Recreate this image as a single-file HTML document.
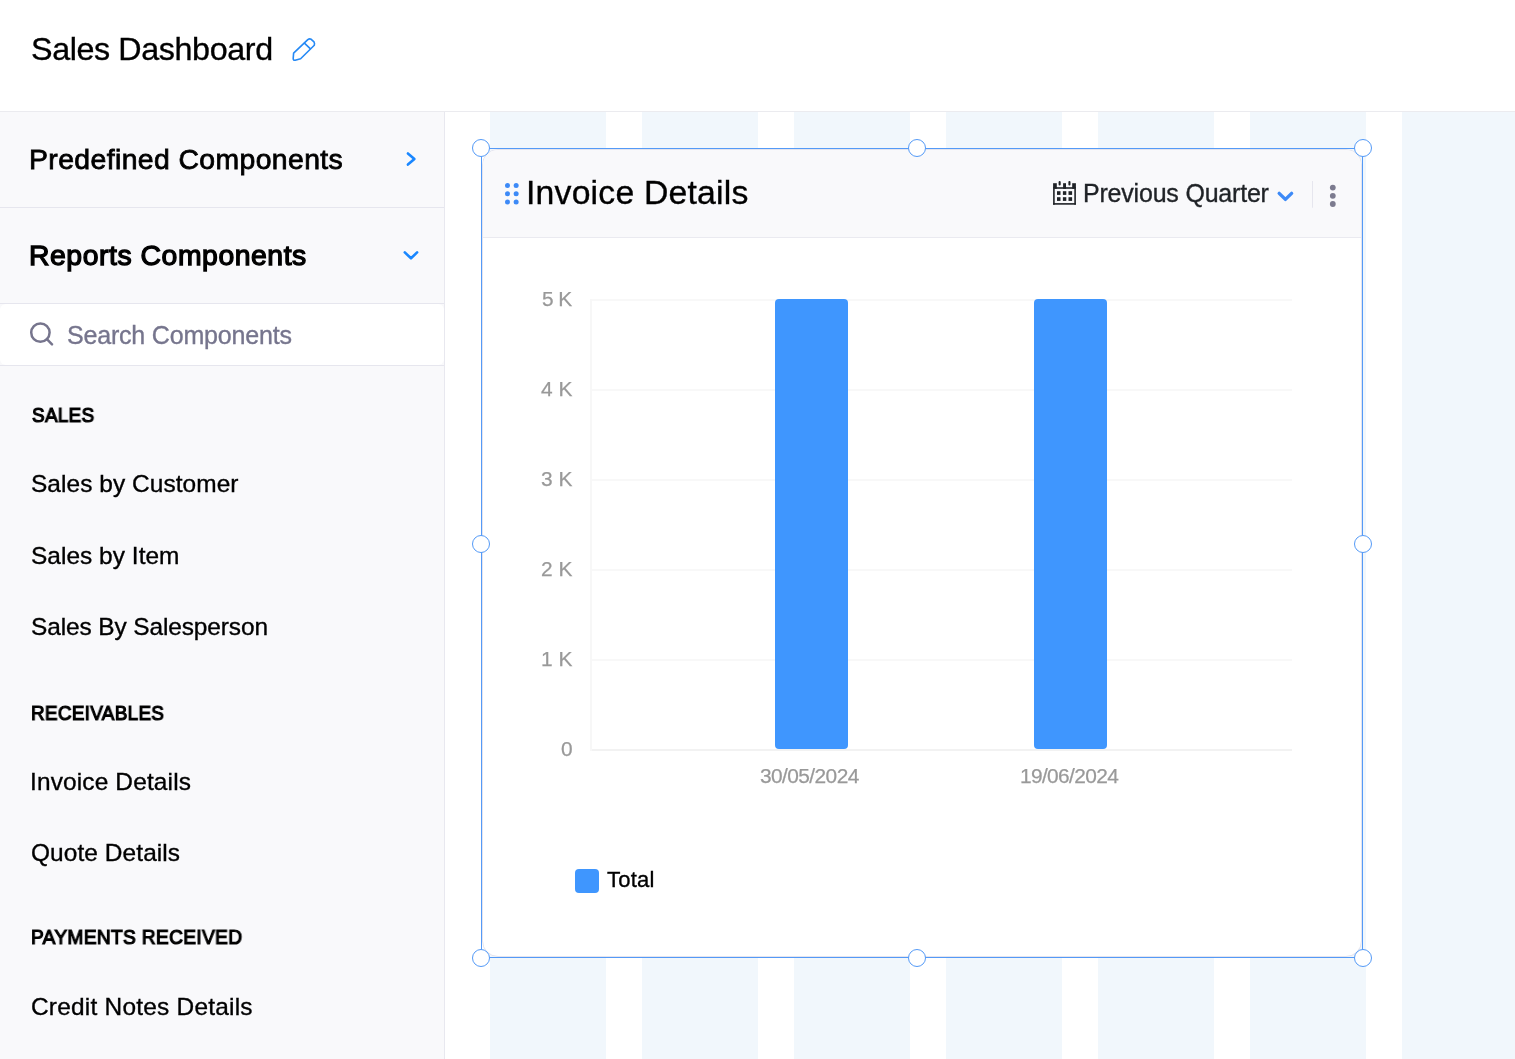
<!DOCTYPE html>
<html><head><meta charset="utf-8">
<style>
*{margin:0;padding:0;box-sizing:border-box}
html,body{width:1515px;height:1059px;overflow:hidden;background:#fff;font-family:"Liberation Sans",sans-serif;color:#000}
.a{position:absolute;white-space:nowrap;line-height:1;will-change:transform}
#hdr{position:absolute;left:0;top:0;width:1515px;height:112px;background:#fff;border-bottom:1px solid #ebebef}
#side{position:absolute;left:0;top:112px;width:445px;height:947px;background:#f9f9fb;border-right:1px solid #e8e8ef}
.sep{position:absolute;left:0;width:444px;height:1px;background:#e6e6ee}
#search{position:absolute;left:0;top:304px;width:444px;height:61px;background:#fff;border-radius:6px}
.col{position:absolute;top:112px;width:116px;height:947px;background:#f1f7fc}
#card{position:absolute;left:482px;top:149px;width:880px;height:808px;background:#fff;border:1px solid #e4e4ee;border-radius:16px;overflow:hidden}
#chd{position:absolute;left:0;top:0;width:100%;height:88px;background:#f9f9fb;border-bottom:1px solid #eaeaf0}
.grid{position:absolute;left:591px;width:701px;height:2px;background:#f8f8f8}
.yl{position:absolute;color:#999;font-size:20px;line-height:1;text-align:right;width:60px;left:512px}
.bar{position:absolute;top:299px;width:73px;height:450px;background:#3f96fe;border-radius:4px}
.xl{position:absolute;color:#999;font-size:20px;line-height:1}
.sl{position:absolute;background:#549af7}
.hd{position:absolute;width:18px;height:18px;border:1.7px solid #549af7;border-radius:50%;background:#fff}
</style></head>
<body>
<div id="hdr"></div>
<div class="a" style="left:30.59px;top:33.22px;font-size:32.28px;letter-spacing:-0.389px;-webkit-text-stroke:0.35px currentColor">Sales Dashboard</div>
<svg style="position:absolute;left:285px;top:32px" width="40" height="36" viewBox="0 0 40 36" fill="none" stroke="#2589f5" stroke-width="1.6" stroke-linejoin="round" stroke-linecap="round">
<path d="M8.6 21.2 L22.8 7.6 Q24.5 6.3 26.2 7.3 L29 9.9 Q29.9 11.4 29.3 13.2 L15.6 26.8 L10.2 28.2 Q8 28.6 8.2 26.4 Z"/>
<path d="M19.4 11.2 L25.2 16.7"/>
</svg>

<div id="side">
</div>
<div class="sep" style="top:207px"></div>
<div class="sep" style="top:303px"></div>
<div id="search"></div>
<div class="sep" style="top:365px"></div>

<div class="a" style="left:29.13px;top:144.53px;font-size:28.37px;letter-spacing:0.397px;-webkit-text-stroke:0.8px currentColor">Predefined Components</div>
<div class="a" style="left:29.32px;top:240.67px;font-size:28.37px;letter-spacing:0.547px;-webkit-text-stroke:1.3px currentColor">Reports Components</div>
<div class="a" style="left:67.12px;top:322.61px;font-size:25.04px;letter-spacing:-0.204px;color:#76758d;-webkit-text-stroke:0.35px currentColor">Search Components</div>
<div class="a" style="left:31.85px;top:405.27px;font-size:20.60px;letter-spacing:0.400px;transform:scaleX(0.9144);transform-origin:0 0;-webkit-text-stroke:1.2px currentColor">SALES</div>
<div class="a" style="left:31.31px;top:472.20px;font-size:24.45px;letter-spacing:0.064px;-webkit-text-stroke:0.35px currentColor">Sales by Customer</div>
<div class="a" style="left:31.36px;top:543.93px;font-size:24.45px;letter-spacing:0.032px;-webkit-text-stroke:0.35px currentColor">Sales by Item</div>
<div class="a" style="left:31.34px;top:614.93px;font-size:24.45px;letter-spacing:-0.106px;-webkit-text-stroke:0.35px currentColor">Sales By Salesperson</div>
<div class="a" style="left:30.96px;top:702.83px;font-size:20.60px;letter-spacing:0.400px;transform:scaleX(0.9130);transform-origin:0 0;-webkit-text-stroke:1.2px currentColor">RECEIVABLES</div>
<div class="a" style="left:29.85px;top:769.52px;font-size:24.45px;letter-spacing:0.143px;-webkit-text-stroke:0.35px currentColor">Invoice Details</div>
<div class="a" style="left:31.20px;top:840.78px;font-size:24.45px;letter-spacing:0.085px;-webkit-text-stroke:0.35px currentColor">Quote Details</div>
<div class="a" style="left:30.77px;top:926.83px;font-size:20.60px;letter-spacing:0.400px;transform:scaleX(0.9271);transform-origin:0 0;-webkit-text-stroke:1.2px currentColor">PAYMENTS RECEIVED</div>
<div class="a" style="left:30.98px;top:995.01px;font-size:24.45px;letter-spacing:0.225px;-webkit-text-stroke:0.35px currentColor">Credit Notes Details</div>

<svg style="position:absolute;left:395px;top:140px" width="35" height="130" viewBox="0 0 35 130" fill="none" stroke="#1a87ff" stroke-width="2.6" stroke-linecap="round" stroke-linejoin="round">
<path d="M12.9 13.5 L19.4 19 L12.9 24.6"/>
<path d="M9.8 112.4 L16 118.3 L22.1 112.4"/>
</svg>
<svg style="position:absolute;left:0;top:290px" width="120" height="90" viewBox="0 0 120 90" fill="none" stroke="#76758d" stroke-width="2.5" stroke-linecap="round">
<circle cx="40.4" cy="42.6" r="9.2"/>
<path d="M46.9 49.2 L52 54.4"/>
</svg>

<div class="col" style="left:490px"></div>
<div class="col" style="left:642px"></div>
<div class="col" style="left:794px"></div>
<div class="col" style="left:946px"></div>
<div class="col" style="left:1098px"></div>
<div class="col" style="left:1250px"></div>
<div class="col" style="left:1402px"></div>

<div id="card"><div id="chd"></div></div>

<svg style="position:absolute;left:498px;top:176px" width="30" height="34" viewBox="0 0 30 34" fill="#3d8af7">
<circle cx="9.5" cy="9.5" r="2.5"/><circle cx="18.15" cy="9.5" r="2.5"/>
<circle cx="9.5" cy="17.8" r="2.5"/><circle cx="18.15" cy="17.8" r="2.5"/>
<circle cx="9.5" cy="25.9" r="2.5"/><circle cx="18.15" cy="25.9" r="2.5"/>
</svg>
<div class="a" style="left:525.76px;top:176.04px;font-size:33.78px;letter-spacing:0.200px;-webkit-text-stroke:0.35px currentColor">Invoice Details</div>

<svg style="position:absolute;left:1048px;top:176px" width="34" height="34" viewBox="0 0 34 34" fill="#1f2226">
<rect x="5.1" y="7.2" width="3.7" height="5.6"/>
<rect x="15.1" y="7.2" width="2.9" height="5.6"/>
<rect x="24.2" y="7.2" width="3.7" height="5.6"/>
<rect x="5.1" y="11.2" width="22.8" height="1.6"/>
<rect x="5.1" y="12.8" width="1.6" height="15.9"/>
<rect x="26.3" y="12.8" width="1.6" height="15.9"/>
<rect x="5.1" y="27.1" width="22.8" height="1.6"/>
<rect x="10.6" y="5.1" width="2.1" height="4.5" rx="1"/>
<rect x="20.4" y="5.1" width="2.1" height="4.5" rx="1"/>
<rect x="9" y="15.2" width="3.5" height="3.7"/><rect x="14.9" y="15.2" width="3.4" height="3.7"/><rect x="20.5" y="15.2" width="3.6" height="3.7"/>
<rect x="9" y="21.2" width="3.5" height="3.7"/><rect x="14.9" y="21.2" width="3.4" height="3.7"/><rect x="20.5" y="21.2" width="3.6" height="3.7"/>
</svg>
<div class="a" style="left:1082.58px;top:181.09px;font-size:24.98px;letter-spacing:-0.186px;color:#1f2226;-webkit-text-stroke:0.35px currentColor">Previous Quarter</div>
<svg style="position:absolute;left:1270px;top:176px" width="80" height="36" viewBox="0 0 80 36" fill="none">
<path d="M9.2 17.4 L15.4 23.4 L21.6 17.4" stroke="#3d8af7" stroke-width="3.4" stroke-linecap="round" stroke-linejoin="round"/>
<rect x="42" y="5" width="1" height="26.7" fill="#e6e6ee"/>
<circle cx="62.8" cy="11.6" r="2.9" fill="#7c7b8f"/>
<circle cx="62.8" cy="19.8" r="2.9" fill="#7c7b8f"/>
<circle cx="62.8" cy="28" r="2.9" fill="#7c7b8f"/>
</svg>

<!-- chart -->
<div class="grid" style="top:299px"></div>
<div class="grid" style="top:389px"></div>
<div class="grid" style="top:479px"></div>
<div class="grid" style="top:569px"></div>
<div class="grid" style="top:659px"></div>
<div class="grid" style="top:749px;background:#f2f2f2"></div>
<div style="position:absolute;left:590px;top:299px;width:2px;height:452px;background:#f7f7f7"></div>
<div class="a" style="left:541.77px;top:288.50px;font-size:20.90px;letter-spacing:-0.627px;color:#999999;-webkit-text-stroke:0.25px currentColor">5 K</div>
<div class="a" style="left:541.28px;top:378.50px;font-size:20.90px;letter-spacing:0.000px;color:#999999;-webkit-text-stroke:0.25px currentColor">4 K</div>
<div class="a" style="left:541.28px;top:468.50px;font-size:20.90px;letter-spacing:0.000px;color:#999999;-webkit-text-stroke:0.25px currentColor">3 K</div>
<div class="a" style="left:541.28px;top:558.50px;font-size:20.90px;letter-spacing:0.000px;color:#999999;-webkit-text-stroke:0.25px currentColor">2 K</div>
<div class="a" style="left:541.28px;top:648.50px;font-size:20.90px;letter-spacing:0.000px;color:#999999;-webkit-text-stroke:0.25px currentColor">1 K</div>
<div class="a" style="left:561.03px;top:738.50px;font-size:20.90px;letter-spacing:0.000px;color:#999999;-webkit-text-stroke:0.25px currentColor">0</div>
<div class="bar" style="left:775px"></div>
<div class="bar" style="left:1034px"></div>
<div class="a" style="left:760.32px;top:765.92px;font-size:20.90px;letter-spacing:-0.585px;color:#999999;-webkit-text-stroke:0.25px currentColor">30/05/2024</div>
<div class="a" style="left:1020.19px;top:766.16px;font-size:20.90px;letter-spacing:-0.641px;color:#999999;-webkit-text-stroke:0.25px currentColor">19/06/2024</div>
<div style="position:absolute;left:575px;top:869px;width:24px;height:24px;background:#3f96fe;border-radius:4px"></div>
<div class="a" style="left:607.33px;top:869.02px;font-size:22.01px;letter-spacing:0.206px;-webkit-text-stroke:0.35px currentColor">Total</div>

<!-- selection -->
<div class="sl" style="left:481px;top:148px;width:882px;height:1px"></div>
<div class="sl" style="left:481px;top:957px;width:882px;height:1px"></div>
<div class="sl" style="left:481px;top:148px;width:1px;height:810px"></div>
<div class="sl" style="left:1362px;top:148px;width:1px;height:810px"></div>
<div class="hd" style="left:472px;top:139px"></div>
<div class="hd" style="left:908px;top:139px"></div>
<div class="hd" style="left:1354px;top:139px"></div>
<div class="hd" style="left:472px;top:535px"></div>
<div class="hd" style="left:1354px;top:535px"></div>
<div class="hd" style="left:472px;top:949px"></div>
<div class="hd" style="left:908px;top:949px"></div>
<div class="hd" style="left:1354px;top:949px"></div>
</body></html>
